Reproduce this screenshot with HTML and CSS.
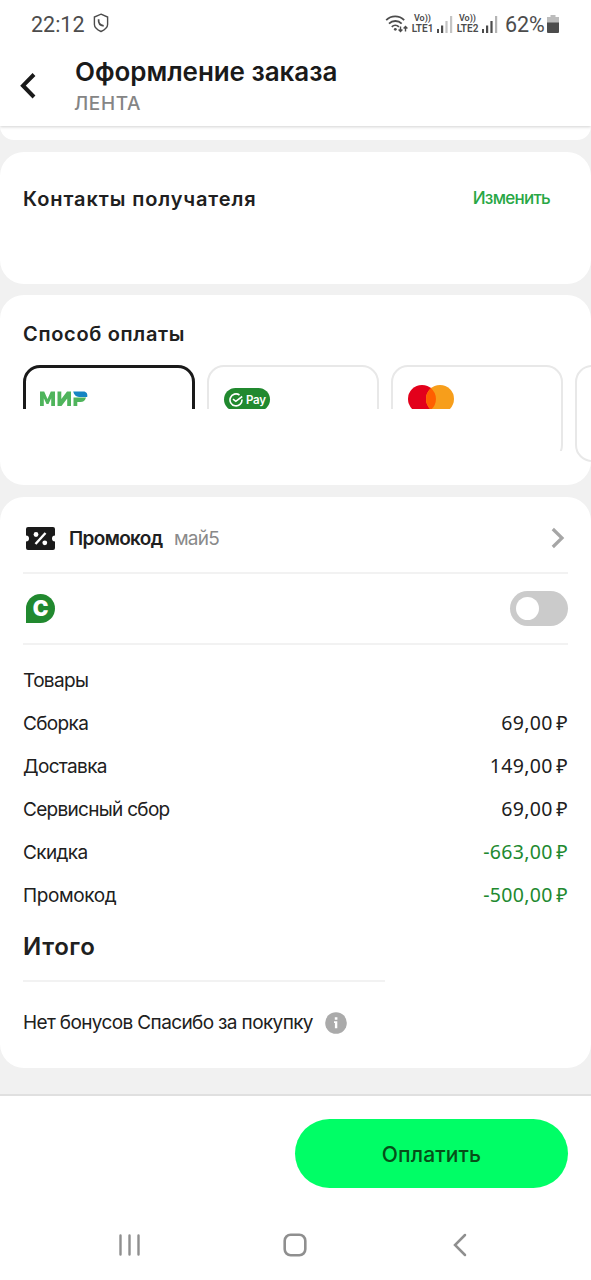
FILE: index.html
```html
<!DOCTYPE html>
<html lang="ru">
<head>
<meta charset="utf-8">
<title>Оформление заказа</title>
<link rel="stylesheet" href="styles.css">
</head>
<body>
<div class="screen">
  <div class="status">
    <span class="clock">22:12</span>
    <svg class="shield" width="16" height="20" viewBox="0 0 16 20" fill="none" stroke="#4c4c4c" stroke-width="1.4"><path d="M8 1.200 14.600 4v7.500c0 3.300-3.600 5.600-6.600 7-3-1.400-6.600-3.700-6.600-7V4z"/><path d="M5.600 6.200c-.3 3.600 1.700 6.200 5.100 6.600" stroke-width="1.700"/></svg>
    <svg class="wifi" width="24" height="20" viewBox="0 0 24 20" fill="none" stroke="#4c4c4c" stroke-width="1.800"><path d="M1.200 6.200c5-5 13-5 18 0M4 9.600c3.500-3.500 9.200-3.500 12.700 0M6.800 12.800c2-2 5-2 7.100 0"/><circle cx="10.300" cy="15.300" r="1.400" fill="#4c4c4c" stroke="none"/><path d="M15.500 12.500v5M13.600 15.500l1.900 2 1.900-2M20.500 17.500v-5M18.600 14.500l1.900-2 1.900 2" stroke-width="1.400"/></svg>
    <span class="lte"><span class="vo">Vo))</span><span class="net">LTE1</span></span>
    <svg class="signal" width="16" height="17" viewBox="0 0 16 17"><path fill="#4c4c4c" d="M0 13h2v4H0zM4 9.500h2.200V17H4z"/><path fill="#c4c4c4" d="M8.400 5h2.200v12H8.400zM13 0h2.200v17H13z"/></svg>
    <span class="lte lte2"><span class="vo">Vo))</span><span class="net">LTE2</span></span>
    <svg class="signal" width="16" height="17" viewBox="0 0 16 17"><path fill="#4c4c4c" d="M0 13h2v4H0zM4 9.500h2.200V17H4zM8.400 5h2.200v12H8.400z"/><path fill="#b4b4b4" d="M13 0h2.200v17H13z"/></svg>
    <span class="percent">62%</span>
    <svg class="battery" width="12" height="18" viewBox="0 0 12 18"><path fill="#bcbcbc" d="M3.500 0h5v2H12v6H0V2h3.500z"/><path fill="#4c4c4c" d="M0 7.500h12V17q0 1-1 1H1q-1 0-1-1z"/></svg>
  </div>
  <header class="header">
    <svg class="back" width="18" height="28" viewBox="0 0 18 28" fill="none" stroke="#1a1a1a" stroke-width="4"><path d="M15 2.500 4 13.700 15 25"/></svg>
    <div class="heading">
      <h1 class="title">Оформление заказа</h1>
      <div class="shop">ЛЕНТА</div>
    </div>
  </header>
  <main class="content">
    <section class="card card-prev"></section>
    <section class="card card-contacts">
      <h2 class="section-title">Контакты получателя</h2>
      <a class="edit">Изменить</a>
    </section>
    <section class="card card-pay">
      <h2 class="section-title method">Способ оплаты</h2>
      <div class="tiles">
        <div class="tile selected">
          <svg width="48" height="15" viewBox="0 0 48 15"><path fill="#4fb45c" d="M0 15V.5h4.200L7.500 8 10.800.5H15V15h-3.800V7.200L8.500 13h-2L3.800 7.200V15zM17.500 15V.5h3.800V8L27 .5h4V15h-3.800V7.500L21.500 15zM33.500 15V6.400H46c-.8 3.100-2.700 4.600-5.500 4.600h-3.200v4z"/><path fill="#1685c3" d="M33.200.5h10.300c2.900 0 4.300 2.300 3.700 5.400H39c-3 0-5-2.200-5.800-5.400z"/></svg>
        </div>
        <div class="tile">
          <div class="sber-pay"><svg width="14" height="14" viewBox="0 0 14 14" fill="none" stroke="#fff" stroke-width="1.600"><path d="M10.500 2A6 6 0 1 0 13 6.500"/><path d="M4 6.200 6.800 8.300 13.200 3.500"/></svg><span>Pay</span></div>
        </div>
        <div class="tile third">
          <svg width="48" height="30" viewBox="0 0 48 30"><circle cx="14" cy="14" r="14" fill="#e3001b"/><circle cx="32" cy="14" r="14" fill="#f79e1b"/><path fill="#ff5f00" d="M23 3.300a14 14 0 0 1 0 21.400 14 14 0 0 1 0-21.400z"/></svg>
        </div>
        <div class="tile full"></div>
      </div>
    </section>
    <section class="card card-total">
      <div class="row promo">
        <svg class="ticket" width="29" height="23" viewBox="0 0 29 23"><path fill="#1a1a1a" d="M2 0h25q2 0 2 2v6.500a3 3 0 0 0 0 6V21q0 2-2 2H2q-2 0-2-2v-6.500a3 3 0 0 0 0-6V2q0-2 2-2z"/><path d="M9.500 17 19.500 6" stroke="#fff" stroke-width="2.400"/><circle cx="10" cy="7.500" r="2.400" fill="#fff"/><circle cx="18.800" cy="15.800" r="2.400" fill="#fff"/></svg>
        <span class="promo-name">Промокод</span>
        <span class="promo-code">май5</span>
        <svg class="chevron" width="14" height="22" viewBox="0 0 14 22" fill="none" stroke="#a6a6a6" stroke-width="3.200"><path d="M1.800 2 11 11 1.800 20"/></svg>
      </div>
      <div class="row bonus">
        <span class="bonus-logo">С</span>
        <span class="toggle"><span class="knob"></span></span>
      </div>
      <div class="sums">
        <div class="sum"><span>Товары</span></div>
        <div class="sum"><span>Сборка</span><span class="price">69,00 ₽</span></div>
        <div class="sum"><span>Доставка</span><span class="price">149,00 ₽</span></div>
        <div class="sum"><span class="service">Сервисный сбор</span><span class="price">69,00 ₽</span></div>
        <div class="sum"><span>Скидка</span><span class="price discount">-663,00 ₽</span></div>
        <div class="sum"><span class="promo-sum">Промокод</span><span class="price discount">-500,00 ₽</span></div>
      </div>
      <div class="total">Итого</div>
      <div class="thanks">
        <span class="thanks-text">Нет бонусов Спасибо за покупку</span>
        <svg width="22" height="22" viewBox="0 0 22 22"><circle cx="11" cy="11" r="10.800" fill="#aaa"/><path fill="#fff" d="M9.800 5.300h2.600v2.400H9.800zM9 9.200h3.300v7H9.900v-5.300H9z"/></svg>
      </div>
    </section>
  </main>
  <footer class="footer"><button class="pay-button">Оплатить</button></footer>
  <nav class="nav">
    <svg width="22" height="22" viewBox="0 0 22 22" stroke="#8f8f8f" stroke-width="2.400" stroke-linecap="round"><path d="M1.500 1.500v19M10.500 1.500v19M19.500 1.500v19"/></svg>
    <svg class="home" width="24" height="24" viewBox="0 0 24 24" fill="none" stroke="#8f8f8f" stroke-width="2.600"><rect x="1.700" y="1.700" width="20.600" height="20.600" rx="6"/></svg>
    <svg width="14" height="24" viewBox="0 0 14 24" fill="none" stroke="#8f8f8f" stroke-width="2.500" stroke-linecap="round"><path d="M12 2 2 12l10 10"/></svg>
  </nav>
</div>
</body>
</html>
```
FILE: styles.css
```css
* { box-sizing: border-box; }
body { margin: 0; background: #fff; color: #202020; font-family: Inter, "Noto Sans", sans-serif; }
svg { display: block; flex: none; }
span, a, h1, h2 { white-space: nowrap; }
.screen { width: 591px; height: 1280px; overflow: hidden; display: flex; flex-direction: column; }
.status { position: relative; z-index: 2; background: #fff; height: 48px; flex: none; display: flex; align-items: center; padding: 0 31px; color: #4c4c4c; font-family: Roboto, sans-serif; }
.clock { font-size: 21.500px; width: 62px; }
.wifi { margin-left: 276px; }
.shield { margin-top: -2px; }
.lte { display: flex; flex-direction: column; align-items: center; gap: 1px; width: 23px; margin-left: 2px; font-weight: 600; }
.vo { font-size: 9px; line-height: 9px; }
.net { font-size: 10px; line-height: 10px; }
.signal { margin-left: 3px; }
.lte2 { margin-left: 3px; }
.percent { font-size: 21.500px; margin-left: 7px; width: 38px; letter-spacing: -.1px; }
.battery { margin-left: 4px; margin-top: -1px; }
.header { position: relative; z-index: 1; height: 78px; flex: none; display: flex; background: #fff; box-shadow: 0 1px 3px rgba(0,0,0,.18); padding: 8px 0 0 19px; }
.back { margin-top: 16px; }
.heading { margin-left: 38px; }
.title { margin: 0; font-size: 26px; line-height: 32px; font-weight: 600; letter-spacing: -.05px; color: #1a1a1a; }
.shop { font-size: 19px; line-height: 24px; margin-top: 4px; margin-left: -1px; font-weight: 500; color: #858585; letter-spacing: .6px; }
.content { height: 969px; flex: none; background: #f1f1f1; border-bottom: 1px solid #e0e0e0; }
.card { background: #fff; border-radius: 24px; }
.card-prev { height: 14px; border-radius: 0 0 24px 24px; }
.card-contacts { height: 132px; margin-top: 12px; display: flex; justify-content: space-between; padding: 32px 41px 0 23px; }
.section-title { margin: 0; font-size: 20px; line-height: 30px; font-weight: 600; letter-spacing: .9px; color: #202020; }
.method { letter-spacing: .68px; }
.edit { font-size: 17px; line-height: 28px; font-weight: 500; color: #28a745; letter-spacing: -.75px; }
.card-pay { height: 190px; margin-top: 11px; padding: 24px 0 0 23px; overflow: hidden; }
.tiles { display: flex; gap: 12px; margin-top: 16px; }
.tile { flex: none; width: 172px; height: 97px; border: 2px solid #e8e8e8; border-radius: 17px; padding: 21px 0 0 14px; clip-path: inset(0 0 53px 0); }
.selected { border: 3px solid #1a1a1a; padding: 23px 0 0 14px; }
.third { padding-top: 18px; padding-left: 15px; clip-path: polygon(0 0, 100% 0, 100% 86px, 90% 86px, 90% 44px, 0 44px); }
.full { clip-path: none; }
.sber-pay { margin-left: 1px; width: 46px; height: 23px; border-radius: 12px; background: #21892f; color: #fff; display: flex; align-items: center; gap: 3px; padding-left: 5px; font-size: 11.500px; font-weight: 600; letter-spacing: -.3px; }
.card-total { height: 571px; margin-top: 12px; padding: 6px 23px 0; }
.row { display: flex; align-items: center; height: 71px; border-bottom: 2px solid #f2f2f2; }
.promo { padding-left: 3px; padding-top: 1px; padding-right: 3px; }
.promo-name { margin-left: 14px; font-size: 19px; font-weight: 600; letter-spacing: -.65px; width: 96px; }
.promo-code { margin-left: 9px; font-size: 19px; color: #8a8a8a; letter-spacing: -.8px; }
.chevron { margin-left: auto; }
.bonus { padding-left: 3px; justify-content: space-between; }
.bonus-logo { width: 29px; height: 29px; border-radius: 50% 50% 50% 0; background: #21892f; color: #fff; font-size: 21px; font-weight: 900; line-height: 29px; text-align: center; }
.toggle { width: 58px; height: 35px; border-radius: 18px; background: #cbcbcb; padding: 6px; display: flex; }
.knob { width: 23px; height: 23px; border-radius: 50%; background: #fff; }
.sums { padding-top: 14px; }
.sum { height: 43px; display: flex; align-items: center; justify-content: space-between; font-size: 19px; letter-spacing: -.65px; }
.service { letter-spacing: -.7px; }
.promo-sum { letter-spacing: -.4px; }
.price { font-family: "Noto Sans", sans-serif; letter-spacing: .35px; font-size: 19.500px; margin-top: -2px; word-spacing: -2px; }
.discount { color: #21892f; }
.total { width: 362px; height: 65px; padding-top: 15px; border-bottom: 2px solid #f2f2f2; font-size: 24px; line-height: 30px; font-weight: 600; letter-spacing: .6px; }
.thanks { display: flex; align-items: center; gap: 12px; height: 81px; }
.thanks-text { font-size: 19px; letter-spacing: -.63px; width: 290px; }
.footer { height: 115px; flex: none; padding: 23px 23px 0; border-top: 1px solid #e0e0e0; display: flex; justify-content: flex-end; }
.pay-button { width: 273px; height: 69px; padding-top: 3px; border: 0; border-radius: 35px; background: #00fe66; color: #064f18; font-family: Inter, sans-serif; font-size: 21px; font-weight: 500; letter-spacing: .15px; }
.nav { flex: 1; display: flex; justify-content: space-between; align-items: center; padding: 0 124px 0 119px; }
.home { margin-right: 4px; }
```
